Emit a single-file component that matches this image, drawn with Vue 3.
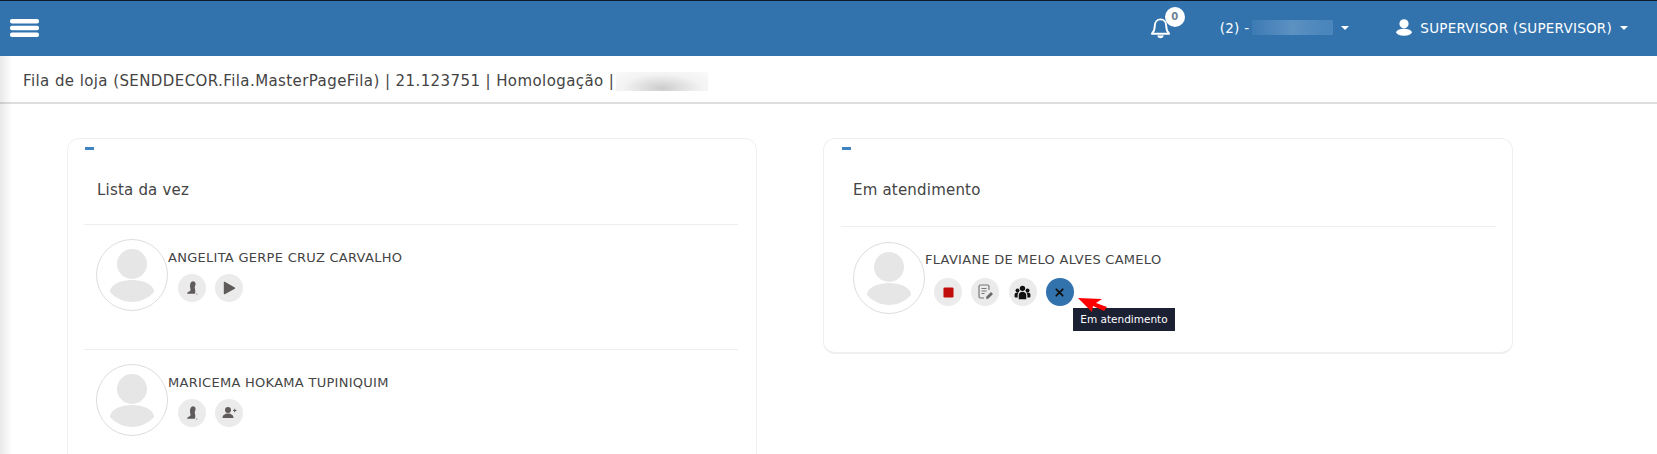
<script setup>
const waiting = [
  { name: 'ANGELITA GERPE CRUZ CARVALHO', actions: ['person', 'play'] },
  { name: 'MARICEMA HOKAMA TUPINIQUIM', actions: ['person', 'add'] }
]
</script>

<template>
  <div class="page">
    <header class="topbar">
      <svg class="burger" viewBox="0 0 29 18" width="29" height="18"><rect y="0" width="29" height="4.6" rx="2"/><rect y="6.7" width="29" height="4.6" rx="2"/><rect y="13.4" width="29" height="4.6" rx="2"/></svg>
      <div class="spacer"></div>
      <div class="bell">
        <svg viewBox="0 0 22 24" width="21" height="23" fill="none" stroke="#fff" stroke-width="2"><path d="M2 18.5c2-2 3-3.500 3-8 0-4 2.500-7 6-7s6 3 6 7c0 4.500 1 6 3 8z" stroke-linejoin="round"/><path d="M8.500 20.500c.4 2.300 4.600 2.300 5 0" fill="#fff"/></svg>
        <span class="badge">0</span>
      </div>
      <div class="store">(2) -<span class="blur"></span><i class="caret"></i></div>
      <div class="user">
        <svg viewBox="0 0 16 17" width="16" height="17" fill="#fff"><circle cx="8" cy="4.800" r="4.600"/><ellipse cx="8" cy="13.300" rx="7.800" ry="3.500"/></svg>
        <span>SUPERVISOR (SUPERVISOR)</span><i class="caret"></i>
      </div>
    </header>

    <div class="subbar">
      <span>Fila de loja (SENDDECOR.Fila.MasterPageFila) | 21.123751 | Homologação |</span>
      <span class="subblur"></span>
    </div>

    <main class="content">
      <section class="card left">
        <div class="minus"></div>
        <h2>Lista da vez</h2>
        <div v-for="p in waiting" :key="p.name" class="row">
          <svg class="avatar" viewBox="0 0 72 72"><circle cx="36" cy="36" r="35.500" fill="#fff" stroke="#ddd"/><circle cx="36" cy="25" r="15" fill="#e6e6e6"/><path d="M14 53c0-8 12-12 22-12s22 4 22 12c0 0-8 10-22 10S14 53 14 53z" fill="#e6e6e6"/></svg>
          <div class="info">
            <div class="name">{{ p.name }}</div>
            <div class="actions">
              <span v-for="a in p.actions" :key="a" class="act">
                <svg v-if="a === 'person'" viewBox="0 0 16 16" width="16" height="16" fill="#5f5b5b"><path d="M8.800 1.200c1.800 0 2.800 1.200 2.800 2.900 0 1.200-.6 2-.8 3-.2 1.300.5 2.400.5 4 0 1-.2 2-.4 2.700H3.200c-.2-.9.500-1.900 1.900-2.300 1-.3 1.500-.9 1.400-2-.1-1.100-.5-2-.5-3.300 0-2.800 1-5 2.800-5z"/><circle cx="12.800" cy="14" r=".6"/></svg>
                <svg v-else-if="a === 'play'" viewBox="0 0 16 16" width="16" height="16" fill="#5f5b5b"><path d="M2.800 2.400v11.200c0 .6.500.9 1 .6l10-5.500c.5-.3.500-1 0-1.300l-10-5.600c-.5-.3-1 0-1 .6z"/></svg>
                <svg v-else viewBox="0 0 16 16" width="16" height="16" fill="#5f5b5b"><circle cx="7" cy="5" r="3"/><path d="M1.500 13c0-3 2.500-4.500 5.500-4.500s5.500 1.500 5.500 4.500z"/><path d="M12 5h1.200V3.800h1V5h1.200v1h-1.200v1.200h-1V6H12z"/></svg>
              </span>
            </div>
          </div>
        </div>
      </section>

      <section class="card right">
        <div class="minus"></div>
        <h2>Em atendimento</h2>
        <div class="row attending">
          <svg class="avatar" viewBox="0 0 72 72"><circle cx="36" cy="36" r="35.500" fill="#fff" stroke="#ddd"/><circle cx="36" cy="25" r="15" fill="#e6e6e6"/><path d="M14 53c0-8 12-12 22-12s22 4 22 12c0 0-8 10-22 10S14 53 14 53z" fill="#e6e6e6"/></svg>
          <div class="info">
            <div class="name">FLAVIANE DE MELO ALVES CAMELO</div>
            <div class="actions">
              <span class="act"><svg viewBox="0 0 12 12" width="11" height="11"><rect width="11" height="11" x=".5" y=".5" rx="1.500" fill="#c20d0d"/></svg></span>
              <span class="act">
                <svg viewBox="0 0 18 18" width="18" height="18" fill="none" stroke="#777" stroke-width="1.200"><path d="M13 7V3.500A1.500 1.500 0 0 0 11.500 2h-7A1.500 1.500 0 0 0 3 3.500v10A1.500 1.500 0 0 0 4.500 15H8"/><path d="M5.500 5.500h5M5.500 8h5M5.500 10.500h3"/><path d="M10 16l.5-2.500 4.500-4.500 2 2-4.500 4.500z" fill="#6a6a6a" stroke="none"/></svg>
              </span>
              <span class="act">
                <svg viewBox="0 0 20 18" width="17" height="15" fill="#111"><circle cx="10" cy="4" r="3.200"/><circle cx="4" cy="6.500" r="2.400"/><circle cx="16" cy="6.500" r="2.400"/><path d="M5.500 17v-5c0-2.500 2-4 4.500-4s4.500 1.500 4.500 4v5z"/><path d="M0.500 14v-2.500C.5 10 2 9 4 9c.5 0 1 .1 1.300.3C4.500 10 4.200 11 4.200 12v3C2 15 .5 14.700.5 14zM19.500 14v-2.500C19.500 10 18 9 16 9c-.5 0-1 .1-1.300.3.800.7 1.100 1.700 1.100 2.700v3c2.200 0 3.700-.3 3.700-1z"/></svg>
              </span>
              <span class="act active"><svg viewBox="0 0 12 12" width="11" height="11" stroke="#111" stroke-width="2" stroke-linecap="round"><path d="M2.500 2.500l7 7M9.500 2.500l-7 7"/></svg></span>
            </div>
          </div>
          <div class="tooltip">Em atendimento</div>
          <svg class="arrow" viewBox="0 0 31 16" width="31" height="16"><path d="M1 1l24 1-6 4 11 4-3 4-11-5-1 6z" fill="#f00"/></svg>
        </div>
      </section>
    </main>
    <div class="edge"></div>
  </div>
</template>

<style>
html, body { margin: 0; overflow: hidden; background: #fff; }
</style>

<style scoped>
.page { position: relative; width: 1657px; height: 454px; overflow: hidden; background: #fff; font-family: "DejaVu Sans", sans-serif; color: #444; }
.topbar { height: 55px; border-top: 1px solid #0e1c2e; background: #3273ae; display: flex; align-items: center; color: #fff; font-size: 13.5px; letter-spacing: .25px; }
.burger { margin-left: 10px; fill: #fff; margin-top: -2px; }
.spacer { flex: 1; }
.bell { position: relative; width: 21px; height: 23px; margin-top: -2px; }
.badge { position: absolute; left: 15px; top: -9px; width: 20px; height: 20px; border-radius: 50%; background: #fff; color: #6b7f96; font-size: 10px; font-weight: 700; line-height: 20px; text-align: center; letter-spacing: 0; }
.store { margin-left: 49px; margin-top: -2px; display: flex; align-items: center; }
.blur { width: 81px; height: 15px; margin-left: 3px; background: linear-gradient(90deg, #3d7bb4, #5c91c2 50%, #4a85bb 90%); }
.caret { width: 0; height: 0; border: 4px solid transparent; border-top-color: #fff; border-bottom: 0; margin-left: 8px; }
.user { margin-left: 47px; margin-right: 29px; margin-top: -2px; display: flex; align-items: center; }
.user span { margin-left: 8px; }
.subbar { height: 42px; padding-top: 4px; border-bottom: 2px solid #ddd; display: flex; align-items: center; padding-left: 23px; font-size: 15px; letter-spacing: .41px; color: #444; }
.subblur { width: 92px; height: 19px; margin-left: 2px; background: radial-gradient(ellipse at 50% 85%, #ccc, #f3f3f3 60%, #fafafa); }
.content { display: flex; gap: 66px; padding: 34px 0 0 67px; align-items: flex-start; }
.card { border: 1px solid #efefef; border-radius: 12px; margin: 0; }
.left { width: 654px; padding: 0 18px 0 16px; height: 400px; }
.right { width: 655px; padding: 0 16px 0 17px; border-bottom-width: 2px; }
.minus { width: 9px; height: 3px; background: #3f82c4; margin: 8px 0 0 1px; }
.right .minus { margin-left: 1px; }
h2 { margin: 0; font-size: 15px; letter-spacing: .2px; font-weight: 400; color: #444; height: 74px; box-sizing: border-box; padding: 30px 0 0 13px; line-height: 20px; }
.right h2 { height: 76px; padding-left: 12px; }
.row { position: relative; height: 124px; border-top: 1px solid #eee; display: flex; align-items: flex-start; padding-left: 12px; }
.attending { height: 125px; }
.avatar { width: 72px; height: 72px; margin-top: 14px; flex: none; }
.attending .avatar { margin-top: 15px; }
.info { margin-top: 24px; }
.attending .info { margin-top: 24px; }
.name { font-size: 13px; letter-spacing: .28px; line-height: 18px; color: #444; white-space: nowrap; }
.actions { display: flex; gap: 9px; margin: 7px 0 0 10px; }
.attending .actions { margin: 9px 0 0 9px; gap: 9.3px; }
.act { width: 28px; height: 28px; border-radius: 50%; background: #ebebeb; display: flex; align-items: center; justify-content: center; }
.active { background: #3273ae; }
.arrow { position: absolute; left: 236px; top: 70px; }
.tooltip { position: absolute; left: 232px; top: 81px; width: 102px; height: 23px; background: #1c2033; color: #fff; font-size: 10.5px; line-height: 23px; text-align: center; }
.edge { position: absolute; left: 0; top: 56px; bottom: 0; width: 12px; background: linear-gradient(90deg, rgba(0,0,0,.09), rgba(0,0,0,0)); pointer-events: none; }
</style>
